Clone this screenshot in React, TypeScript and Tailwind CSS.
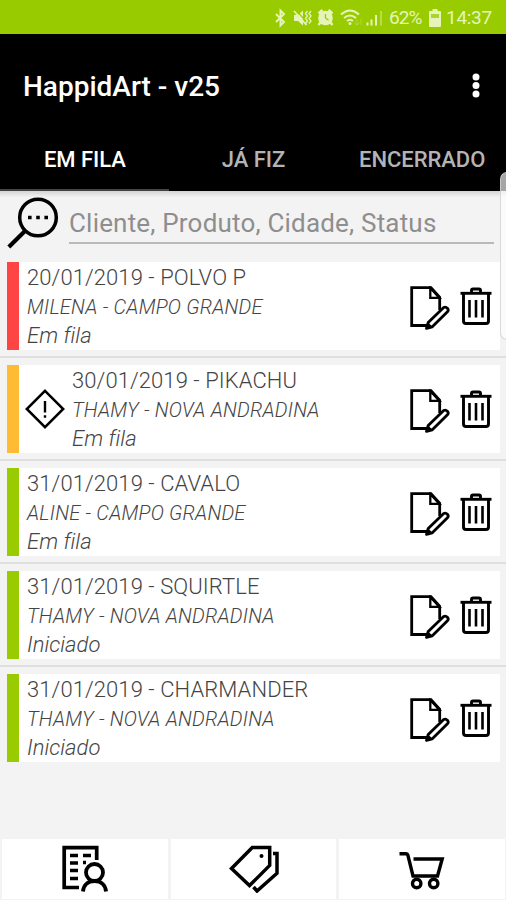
import type { ReactNode } from 'react';
import clsx from 'clsx';

interface Order {
  date: string;
  product: string;
  client: string;
  status: string;
  color: string;
  warning?: boolean;
}

const orders: Order[] = [
  { date: '20/01/2019', product: 'POLVO P', client: 'MILENA - CAMPO GRANDE', status: 'Em fila', color: 'bg-[#ff4444]' },
  { date: '30/01/2019', product: 'PIKACHU', client: 'THAMY - NOVA ANDRADINA', status: 'Em fila', color: 'bg-[#ffbb33]', warning: true },
  { date: '31/01/2019', product: 'CAVALO', client: 'ALINE - CAMPO GRANDE', status: 'Em fila', color: 'bg-[#99cc00]' },
  { date: '31/01/2019', product: 'SQUIRTLE', client: 'THAMY - NOVA ANDRADINA', status: 'Iniciado', color: 'bg-[#99cc00]' },
  { date: '31/01/2019', product: 'CHARMANDER', client: 'THAMY - NOVA ANDRADINA', status: 'Iniciado', color: 'bg-[#99cc00]' },
];

function StatusBar() {
  return (
    <div className="flex h-[34px] shrink-0 items-center bg-[#99cc00] pl-[274px] pt-[2px] text-[#e6f4ba]">
      <svg width="110" height="22" viewBox="0 0 110 22" fill="none" stroke="currentColor" className="shrink-0">
        {/* bluetooth */}
        <path d="M2 7l8 8-3.5 3.500V3.500L10 7l-8 8" strokeWidth="1.900" />
        {/* muted, vibrating */}
        <path d="M20 8h4l5-4.500v15L24 14h-4z" fill="currentColor" stroke="none" />
        <path d="M21.500 2.500l11.500 13" stroke="#99cc00" strokeWidth="1.200" />
        <path d="M20 4l12.500 14" strokeWidth="1.800" />
        <path d="M33.500 4l-2 2.500 2 2.500-2 2.500 2 2.500-2 2.500M37 4l-2 2.500 2 2.500-2 2.500 2 2.500-2 2.500" strokeWidth="1.300" />
        {/* alarm */}
        <circle cx="51.500" cy="11" r="7.300" fill="currentColor" stroke="none" />
        <path d="M44.500 6.500l4-3.500M58.500 6.500l-4-3.500M46.500 15.500l-2 2.500M56.500 15.500l2 2.500" strokeWidth="2.500" />
        <path d="M51.500 7v4l3 2.200" stroke="#99cc00" strokeWidth="1.300" />
        {/* wifi */}
        <path d="M67 7.500q9-8 18 0M70 11q6-5 12 0M73 14q3-2.500 6 0" strokeWidth="2" />
        <circle cx="76" cy="16.500" r="1.500" fill="currentColor" stroke="none" />
        <path d="M83 12v6M80.500 15.500L83 18l2.500-2.500M87 18v-6" strokeWidth="1" opacity=".3" />
        {/* signal */}
        <path d="M93.500 18.500v-3M97.500 18.500v-6M102 18.500V8" strokeWidth="2" />
        <path d="M107 18.500V4" strokeWidth="2" opacity=".4" />
      </svg>
      <span className="ml-[5px] w-[34px] shrink-0 whitespace-nowrap text-[19px] tracking-[-0.9px]">62%</span>
      <svg width="12" height="18" viewBox="0 0 12 18" className="ml-[6px] shrink-0">
        <path d="M3.500 0h5v2H11q1 0 1 1v14q0 1-1 1H1q-1 0-1-1V3q0-1 1-1h2.500z" fill="currentColor" />
        <path d="M2 5h8v4H2z" fill="#a9d52d" />
      </svg>
      <span className="ml-[5px] whitespace-nowrap text-[19px] tracking-[-0.3px]">14:37</span>
    </div>
  );
}

function SearchIcon() {
  return (
    <svg width="52" height="52" viewBox="0 0 52 52" fill="none" stroke="#000" className="shrink-0">
      <circle cx="31" cy="20.500" r="18.300" strokeWidth="3.500" />
      <path d="M18 34L1.800 50" strokeWidth="4.200" />
      <path d="M21 20.500h3.600M29.200 20.500h3.600M37.400 20.500H41" strokeWidth="3.600" />
    </svg>
  );
}

function EditIcon() {
  return (
    <svg width="40" height="44" viewBox="0 0 40 44" fill="none" stroke="#000" strokeWidth="2.800" className="mt-[3px] shrink-0">
      <path d="M18 39.500H1.700V1.700h19.300l8.700 9.500V24" />
      <path d="M20.300 2v9.800h9z" strokeWidth="2.300" />
      <path d="M16.500 42.300l1.700-5.800L33.700 21.500q2-1 3.700.700 1.500 1.700.300 3.300L22.300 40.800z" fill="#fff" strokeWidth="2.800" strokeLinejoin="round" />
      <path d="M16.800 42l1-4.500 3.500 3z" fill="#000" strokeWidth="1.500" />
    </svg>
  );
}

function TrashIcon() {
  return (
    <svg width="32" height="39" viewBox="0 0 32 39" fill="none" stroke="#000" strokeWidth="2.900" className="shrink-0">
      <path d="M.500 6.300h31" />
      <path d="M11.500 6V3.500q0-1.500 1.500-1.500h6q1.500 0 1.500 1.500V6" />
      <path d="M3.500 7v27q0 2.500 2.500 2.500h20q2.500 0 2.500-2.500V7" />
      <path d="M9.500 13v17.500M16 13v17.500M22.500 13v17.500" strokeWidth="2.600" />
    </svg>
  );
}

function WarningIcon() {
  return (
    <svg width="40" height="40" viewBox="0 0 40 40" fill="none" stroke="#000" className="shrink-0">
      <path d="M20 1.800L38.200 20 20 38.200 1.800 20z" strokeWidth="2.500" />
      <path d="M20 12v11.500M20 26.300v2.400" strokeWidth="2.400" />
    </svg>
  );
}

function OrderRow({ order }: { order: Order }) {
  return (
    <li className="border-b-2 border-[#dfdfdf] pt-[7px] pb-[6px] pl-[7px] pr-[6px] last:border-0">
      <div className="flex h-[88px] bg-white">
        <div className={clsx('w-3 shrink-0', order.color)} />
        {order.warning && (
          <div className="flex items-center pl-[6px] pr-[1px]">
            <WarningIcon />
          </div>
        )}
        <div
          className={clsx(
            'flex-1 whitespace-nowrap pt-[1px] font-light text-[#444]',
            order.warning ? 'pl-[6px]' : 'pl-[8px]'
          )}
        >
          <p className="text-[22px] leading-[30px] tracking-[0.08px]">{order.date} - {order.product}</p>
          <p className="text-[20px] italic leading-[29px] tracking-[0.22px]">{order.client}</p>
          <p className="text-[22px] italic leading-[28px] tracking-[0.02px]">{order.status}</p>
        </div>
        <div className="flex shrink-0 items-center gap-[10px] pr-[8px]">
          <EditIcon />
          <TrashIcon />
        </div>
      </div>
    </li>
  );
}

function NavButton({ label, children }: { label: string; children: ReactNode }) {
  return (
    <button aria-label={label} className="flex h-[60px] flex-1 items-center justify-center bg-white">
      {children}
    </button>
  );
}

function BottomNav() {
  return (
    <nav className="flex h-[61px] shrink-0 gap-[3px] pl-[2px] pr-[1px]">
      <NavButton label="Clientes">
        <svg width="46" height="47" viewBox="0 0 46 47" fill="none" stroke="#000" className="mb-[2px]">
          <path d="M17 42.500H2.200V2.700h32.500V15" strokeWidth="3.700" />
          <path d="M8 10.500h8M21 10.500h8M8 18h8M21 17.500h3M8 25.500h8M8 33.500h8" strokeWidth="3.400" />
          <circle cx="32.500" cy="27.500" r="8.500" strokeWidth="3.800" />
          <path d="M21 46.500C21.500 39.500 26.500 36 32.500 36S43.500 39.500 44 46.500" strokeWidth="3.800" />
        </svg>
      </NavButton>
      <NavButton label="Produtos">
        <svg width="50" height="48" viewBox="0 0 50 48" fill="none" stroke="#000" strokeWidth="3.500">
          <path d="M2.500 23.500L23.300 2.600h17.400v17.800L20.500 40.600z" />
          <path d="M44 8.500h4v19.800L28 46l-3.500-4" />
          <circle cx="32.500" cy="11" r="2" fill="#000" stroke="none" />
        </svg>
      </NavButton>
      <NavButton label="Vendas">
        <svg width="46" height="40" viewBox="0 0 46 40" fill="none" stroke="#000" strokeWidth="3.400" className="mt-[4px]">
          <path d="M.500 2.700h6.300q1.700 0 2.200 2l5 20.300h24.500l4.700-17H14.500" />
          <circle cx="17.700" cy="32.500" r="4.200" />
          <circle cx="34.700" cy="32.500" r="4.200" />
        </svg>
      </NavButton>
    </nav>
  );
}

export default function App() {
  return (
    <div className="relative flex h-[900px] w-[506px] flex-col overflow-hidden bg-[#f3f3f3] font-['Roboto',sans-serif]">
      <StatusBar />

      <header className="flex h-[157px] shrink-0 flex-col bg-black text-white">
        <div className="flex h-[103px] items-center justify-between pl-[23px] pr-[26px]">
          <h1 className="pt-[3px] text-[28px] font-medium">HappidArt - v25</h1>
          <svg width="8" height="26" viewBox="0 0 8 26" fill="#fff">
            <circle cx="4" cy="4" r="3.500" />
            <circle cx="4" cy="12.500" r="3.500" />
            <circle cx="4" cy="21" r="3.500" />
          </svg>
        </div>
        <div className="grid flex-1 grid-cols-3 text-center text-[22px] font-medium leading-[45px] tracking-[-0.05px] text-[#b4b4b4]">
          <span className="border-b-2 border-[#444] pl-[1px] text-white">EM FILA</span>
          <span className="pl-[1px]">JÁ FIZ</span>
          <span className="pl-[1px]">ENCERRADO</span>
        </div>
      </header>

      <div className="flex h-[64px] shrink-0 bg-linear-to-b from-[#d4d4d4] to-[#f3f3f3] to-10% pl-[7px] pt-[6px]">
        <SearchIcon />
        <div className="ml-[10px] mt-[4px] h-[43px] w-[425px] whitespace-nowrap border-b-2 border-[#b9b9b9] text-[26px] leading-[45px] tracking-[0.19px] text-[#8e8e8e]">
          Cliente, Produto, Cidade, Status
        </div>
      </div>

      <ul className="flex-1">
        {orders.map((order) => (
          <OrderRow key={`${order.date}-${order.product}`} order={order} />
        ))}
      </ul>

      <BottomNav />

      {/* edge panel handle */}
      <div className="absolute right-[-8px] top-[172px] h-[168px] w-[14px] rounded-lg border border-[#d0d0d0]/80 bg-white/65" />
    </div>
  );
}
